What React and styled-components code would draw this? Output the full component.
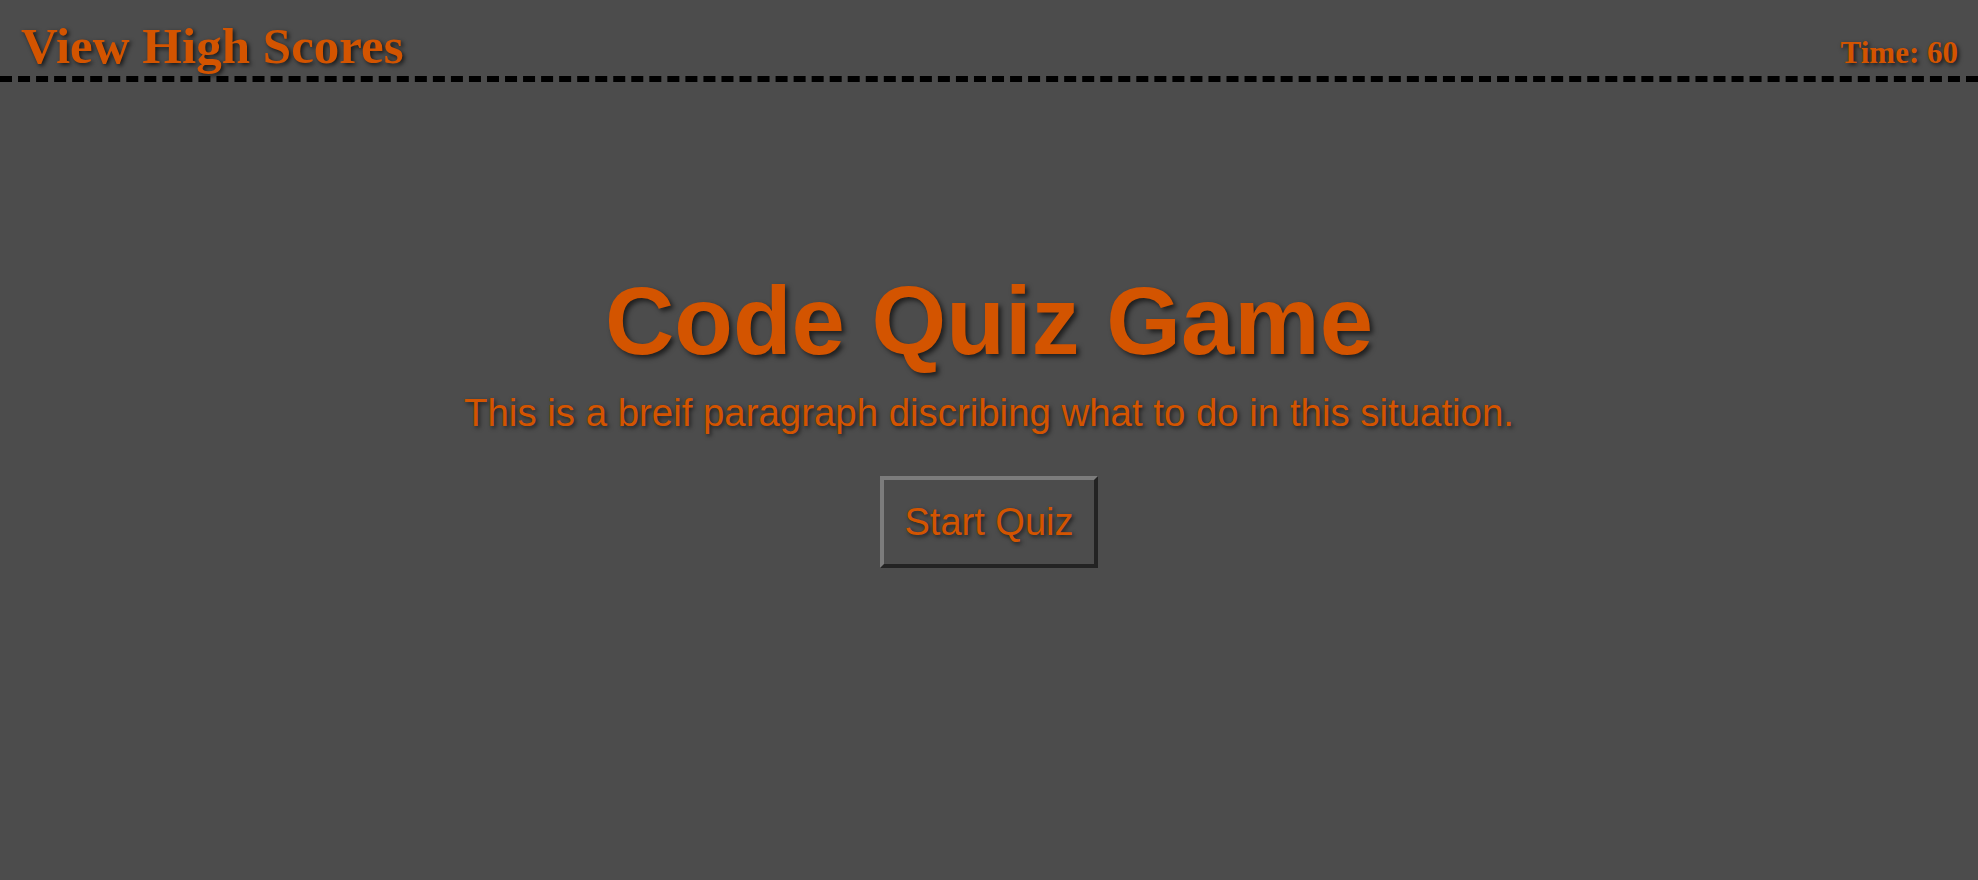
import React from "react";
import styled, { createGlobalStyle } from "styled-components";

const GlobalStyle = createGlobalStyle`
  html, body {
    margin: 0;
    padding: 0;
    background-color: #4c4c4c;
    min-height: 100%;
  }
  body {
    font-family: "Liberation Sans", Arial, sans-serif;
  }
`;

const App = () => {
  return (
    <Page>
      <GlobalStyle />
      <Header>
        <HighScores href="#">View High Scores</HighScores>
        <Timer>Time: 60</Timer>
      </Header>
      <Main>
        <Title>Code Quiz Game</Title>
        <Intro>This is a breif paragraph discribing what to do in this situation.</Intro>
        <StartButton>Start Quiz</StartButton>
      </Main>
    </Page>
  );
};

export default App;

// Styled-components CSS
const Page = styled.div`
  min-height: 880px;
  background-color: #4c4c4c;
  color: #d35400;
`;

const Header = styled.header`
  display: flex;
  justify-content: space-between;
  align-items: baseline;
  padding: 18px 20px 2px 21px;
  border-bottom: 6px dashed #000;
  font-family: "Liberation Serif", "Times New Roman", serif;
`;

const HighScores = styled.a`
  font-size: 51px;
  line-height: 56px;
  font-weight: 700;
  color: #d35400;
  text-decoration: none;
  text-shadow: 2px 2px 4px rgba(0, 0, 0, 0.7);
`;

const Timer = styled.span`
  font-size: 31px;
  font-weight: 700;
  color: #d35400;
  text-shadow: 2px 2px 4px rgba(0, 0, 0, 0.7);
`;

const Main = styled.main`
  display: flex;
  flex-direction: column;
  align-items: center;
  padding-top: 185px;
`;

const Title = styled.h1`
  margin: 0;
  font-size: 96px;
  line-height: 107px;
  font-weight: bold;
  text-shadow: 3px 3px 5px rgba(0, 0, 0, 0.6);
`;

const Intro = styled.p`
  margin: 18px 0 0;
  font-size: 38.4px;
  line-height: 42px;
  text-shadow: 2px 2px 4px rgba(0, 0, 0, 0.6);
`;

const StartButton = styled.button`
  margin-top: 42px;
  padding: 20px 21px;
  font-family: "Liberation Sans", Arial, sans-serif;
  font-size: 38px;
  line-height: 44px;
  color: #d35400;
  background-color: #4c4c4c;
  border: 4px solid;
  border-color: #7c7c7c #232323 #232323 #7c7c7c;
  text-shadow: 2px 2px 4px rgba(0, 0, 0, 0.6);
  cursor: pointer;
`;
